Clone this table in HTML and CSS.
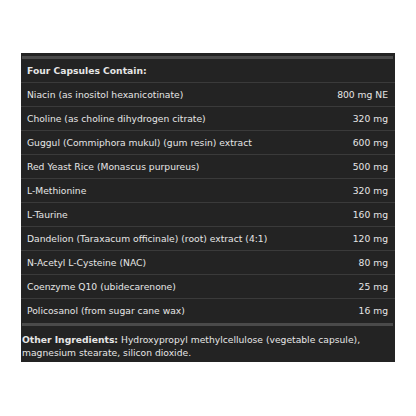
FILE: index.html
```html
<!DOCTYPE html>
<html lang="en">

<head>
    <meta charset="UTF-8">
    <meta name="viewport" content="width=device-width, initial-scale=1.0">
    <title>Supplement Facts</title>
    <link rel="stylesheet" href="styles.css">
</head>

<body>
    <div class="panel">
        <div class="bar"></div>
        <div class="head">Four Capsules Contain:</div>
        <div class="row"><span>Niacin (as inositol hexanicotinate)</span><span>800 mg NE</span></div>
        <div class="row"><span>Choline (as choline dihydrogen citrate)</span><span>320 mg</span></div>
        <div class="row"><span>Guggul (Commiphora mukul) (gum resin) extract</span><span>600 mg</span></div>
        <div class="row"><span>Red Yeast Rice (Monascus purpureus)</span><span>500 mg</span></div>
        <div class="row"><span>L-Methionine</span><span>320 mg</span></div>
        <div class="row"><span>L-Taurine</span><span>160 mg</span></div>
        <div class="row"><span>Dandelion (Taraxacum officinale) (root) extract (4:1)</span><span>120 mg</span></div>
        <div class="row"><span>N-Acetyl L-Cysteine (NAC)</span><span>80 mg</span></div>
        <div class="row"><span>Coenzyme Q10 (ubidecarenone)</span><span>25 mg</span></div>
        <div class="row last"><span>Policosanol (from sugar cane wax)</span><span>16 mg</span></div>
        <div class="bar"></div>
        <p class="other"><b>Other Ingredients:</b> <span>Hydroxypropyl methylcellulose (vegetable capsule),</span> <span>magnesium stearate, silicon dioxide.</span></p>
    </div>
</body>

</html>
```

FILE: styles.css
```css
body {
    margin: 0;
    background: #ffffff;
    font-family: 'DejaVu Sans', sans-serif;
    font-size: 9.2px;
    color: #e6e6e6;
}

.panel {
    width: 374px;
    height: 309px;
    margin: 53px 0 0 21px;
    background-color: #232323;
    box-sizing: border-box;
    padding-top: 3px;
}

.bar {
    height: 3px;
    margin: 0 2px 0 1px;
    background-color: #4a4a4a;
}

.head {
    height: 23px;
    line-height: 23px;
    padding-left: 6px;
    font-weight: bold;
    border-bottom: 1px solid #3a3a3a;
}

.row {
    display: flex;
    justify-content: space-between;
    height: 23px;
    line-height: 23px;
    padding: 0 7px 0 6px;
    border-bottom: 1px solid #3a3a3a;
}

.row.last {
    border-bottom: none;
    height: 24px;
    line-height: 24px;
}

.other {
    margin: 0;
    padding: 7px 2px 0 1px;
    line-height: 13px;
}
```
